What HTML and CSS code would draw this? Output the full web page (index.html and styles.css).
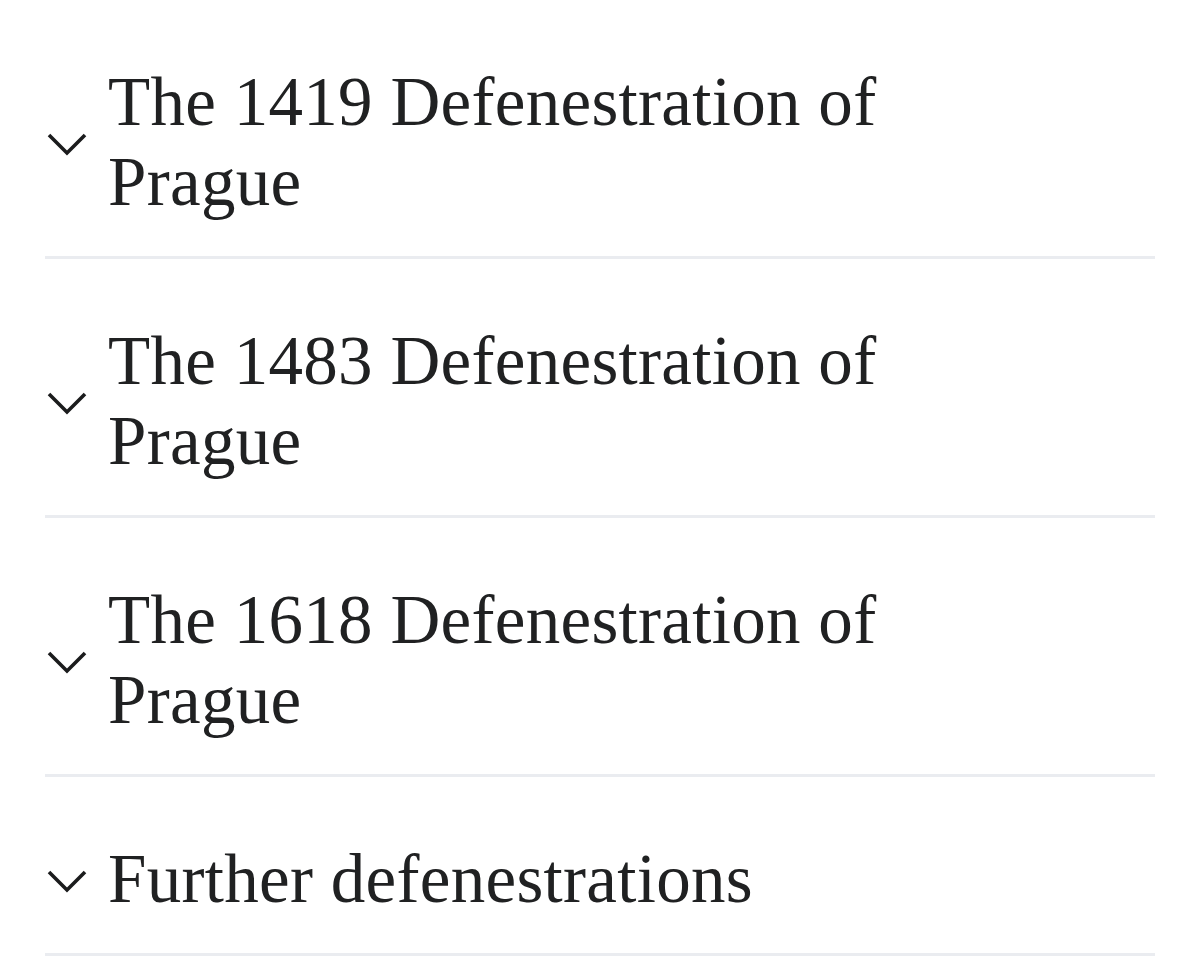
FILE: index.html
```html
<!DOCTYPE html>
<html lang="en">
<head>
    <meta charset="UTF-8">
    <meta name="viewport" content="width=device-width, initial-scale=1.0">
    <title>Defenestrations of Prague</title>
    <link rel="stylesheet" href="styles.css">
</head>
<body>
    <div id="sections">
        <div class="section">
            <svg class="chevron" width="42" height="26" viewBox="0 0 42 26"><path d="M3 4 L21 22 L39 4"/></svg>
            <h2 class="heading">The 1419 Defenestration of Prague</h2>
        </div>
        <div class="section">
            <svg class="chevron" width="42" height="26" viewBox="0 0 42 26"><path d="M3 4 L21 22 L39 4"/></svg>
            <h2 class="heading">The 1483 Defenestration of Prague</h2>
        </div>
        <div class="section">
            <svg class="chevron" width="42" height="26" viewBox="0 0 42 26"><path d="M3 4 L21 22 L39 4"/></svg>
            <h2 class="heading">The 1618 Defenestration of Prague</h2>
        </div>
        <div class="section">
            <svg class="chevron" width="42" height="26" viewBox="0 0 42 26"><path d="M3 4 L21 22 L39 4"/></svg>
            <h2 class="heading">Further defenestrations</h2>
        </div>
    </div>
</body>
</html>
```

FILE: styles.css
```css
body{
    margin: 0;
    background-color: #ffffff;
    color: #202122;
    font-family: "Liberation Serif", "Times New Roman", serif;
}
#sections{
    padding: 0 45px;
}
.section{
    display: flex;
    align-items: center;
    padding: 62px 0 34px 0;
    border-bottom: 3px solid #eaecf0;
}
.chevron{
    flex: none;
    margin-left: 1px;
    margin-right: 20px;
    margin-top: 4px;
}
.chevron path{
    fill: none;
    stroke: #1b1c1d;
    stroke-width: 3.6;
}
.heading{
    margin: 0;
    max-width: 890px;
    font-size: 69px;
    font-weight: normal;
    line-height: 80px;
    letter-spacing: 0.3px;
}
```
